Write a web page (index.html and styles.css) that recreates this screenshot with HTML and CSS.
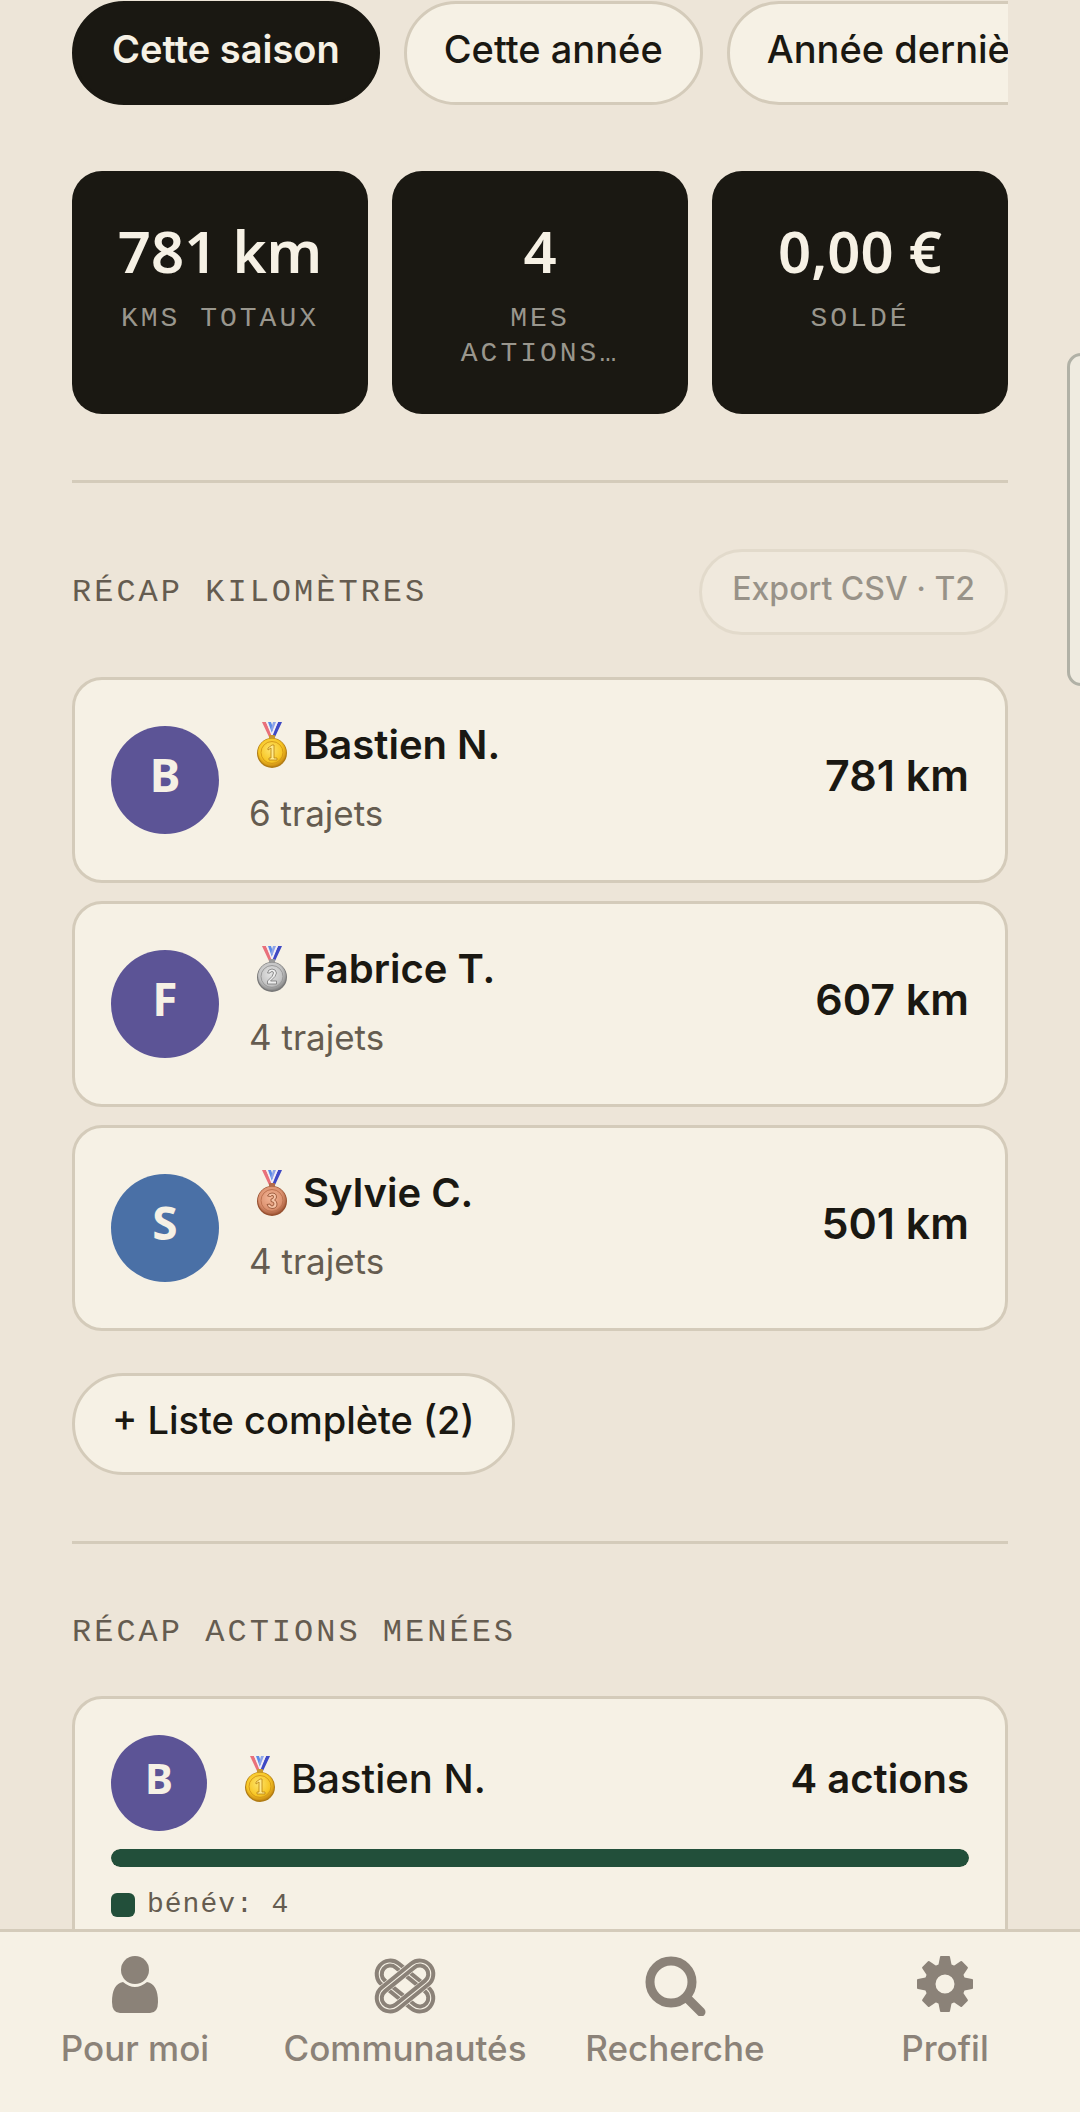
FILE: index.html
```html
<!DOCTYPE html>
<html lang="fr">
<head>
    <meta charset="UTF-8">
    <meta name="viewport" content="width=device-width, initial-scale=1">
    <title>Récap</title>
    <link rel="stylesheet" href="styles.css">
</head>
<body>
    <!-- dégradés et formes partagés par les médailles -->
    <svg class="defs" aria-hidden="true">
        <defs>
            <radialGradient id="gold" cx="45%" cy="40%" r="60%">
                <stop offset="0" stop-color="#fde36a"/>
                <stop offset="0.7" stop-color="#f7c624"/>
                <stop offset="1" stop-color="#c98a12"/>
            </radialGradient>
            <radialGradient id="silver" cx="45%" cy="40%" r="60%">
                <stop offset="0" stop-color="#e4e4e4"/>
                <stop offset="0.7" stop-color="#c3c3c3"/>
                <stop offset="1" stop-color="#858585"/>
            </radialGradient>
            <radialGradient id="bronze" cx="45%" cy="40%" r="60%">
                <stop offset="0" stop-color="#f3b596"/>
                <stop offset="0.7" stop-color="#dc9270"/>
                <stop offset="1" stop-color="#a55a3a"/>
            </radialGradient>
            <symbol id="ribbon" viewBox="0 0 30 46">
                <path d="M5 0h4l7 15h-4z" fill="#e9707a"/>
                <path d="M9 0h2l5 12-1 3z" fill="#f4eff5"/>
                <path d="M11 0h3l3 9-1 5z" fill="#5a8be8"/>
                <path d="M25 0h-4l-7 15h4z" fill="#3f49c4"/>
                <path d="M21 0h-2l-5 12 1 3z" fill="#f4eff5"/>
                <path d="M19 0h-3l-2 7 1 3z" fill="#8ea5ea"/>
            </symbol>
        </defs>
    </svg>

    <main class="content">
        <div class="filters">
            <button class="pill active" type="button">Cette saison</button>
            <button class="pill" type="button">Cette année</button>
            <button class="pill" type="button">Année dernière</button>
        </div>

        <div class="stats">
            <div class="stat">
                <div class="stat-value">781 km</div>
                <div class="stat-label">KMS TOTAUX</div>
            </div>
            <div class="stat">
                <div class="stat-value">4</div>
                <div class="stat-label">MES ACTIONS…</div>
            </div>
            <div class="stat">
                <div class="stat-value">0,00 €</div>
                <div class="stat-label">SOLDÉ</div>
            </div>
        </div>

        <section class="section">
            <div class="section-head">
                <h2 class="section-title">RÉCAP KILOMÈTRES</h2>
                <button class="export" type="button" disabled>Export CSV · T2</button>
            </div>
            <ul class="ranking">
                <li class="card row">
                    <span class="avatar violet">B</span>
                    <div class="who">
                        <div class="name">
                            <svg class="medal" viewBox="0 0 30 46" aria-hidden="true"><use href="#ribbon"/><rect x="12" y="13" width="6" height="4" rx="1" fill="#c9982c"/><circle cx="15" cy="31" r="15" fill="#b07c14"/><circle cx="15" cy="30.500" r="14" fill="url(#gold)"/><circle cx="15" cy="30.500" r="11" fill="none" stroke="#d69a18"/><path d="M11 26l4-3h2v13h3v2h-8v-2h2v-10l-3 2z" fill="#ffe98a" stroke="#b98110" stroke-width=".8"/></svg>
                            Bastien N.
                        </div>
                        <div class="trips">6 trajets</div>
                    </div>
                    <strong class="distance">781 km</strong>
                </li>
                <li class="card row">
                    <span class="avatar violet">F</span>
                    <div class="who">
                        <div class="name">
                            <svg class="medal" viewBox="0 0 30 46" aria-hidden="true"><use href="#ribbon"/><rect x="12" y="13" width="6" height="4" rx="1" fill="#9a9a9a"/><circle cx="15" cy="31" r="15" fill="#777"/><circle cx="15" cy="30.500" r="14" fill="url(#silver)"/><circle cx="15" cy="30.500" r="11" fill="none" stroke="#999"/><path d="M10.500 27q.5-4 4.500-4t4.500 4q0 3-6 8h6v3h-9v-3q6-5 6-8 0-1.500-1.500-1.500t-2 1.500z" fill="#eee" stroke="#777" stroke-width=".8"/></svg>
                            Fabrice T.
                        </div>
                        <div class="trips">4 trajets</div>
                    </div>
                    <strong class="distance">607 km</strong>
                </li>
                <li class="card row">
                    <span class="avatar blue">S</span>
                    <div class="who">
                        <div class="name">
                            <svg class="medal" viewBox="0 0 30 46" aria-hidden="true"><use href="#ribbon"/><rect x="12" y="13" width="6" height="4" rx="1" fill="#b36a4a"/><circle cx="15" cy="31" r="15" fill="#96502f"/><circle cx="15" cy="30.500" r="14" fill="url(#bronze)"/><circle cx="15" cy="30.500" r="11" fill="none" stroke="#bd7250"/><path d="M10.500 26q1-3 4.500-3 4.500 0 4.500 4 0 2-2 3 2.500 1 2.500 4 0 4.500-5 4.500-4 0-5-4l3-.5q.5 2 2 2t2-2-3-2.500v-2.500q2.500 0 2.500-2t-1.500-1.500-1.500 1z" fill="#f6c3a6" stroke="#8d4a2c" stroke-width=".8"/></svg>
                            Sylvie C.
                        </div>
                        <div class="trips">4 trajets</div>
                    </div>
                    <strong class="distance">501 km</strong>
                </li>
            </ul>
            <button class="pill more" type="button">+ Liste complète (2)</button>
        </section>

        <section class="section">
            <h2 class="section-title">RÉCAP ACTIONS MENÉES</h2>
            <div class="card action">
                <div class="action-head">
                    <span class="avatar small violet">B</span>
                    <div class="name regular">
                        <svg class="medal" viewBox="0 0 30 46" aria-hidden="true"><use href="#ribbon"/><rect x="12" y="13" width="6" height="4" rx="1" fill="#c9982c"/><circle cx="15" cy="31" r="15" fill="#b07c14"/><circle cx="15" cy="30.500" r="14" fill="url(#gold)"/><circle cx="15" cy="30.500" r="11" fill="none" stroke="#d69a18"/><path d="M11 26l4-3h2v13h3v2h-8v-2h2v-10l-3 2z" fill="#ffe98a" stroke="#b98110" stroke-width=".8"/></svg>
                        Bastien N.
                    </div>
                    <strong class="count">4 actions</strong>
                </div>
                <div class="bar"><div class="bar-fill" style="width: 100%"></div></div>
                <div class="legend"><span class="dot"></span>bénév: 4</div>
            </div>
        </section>
    </main>

    <nav class="tabs">
        <a class="tab" href="#moi">
            <svg class="tab-icon" viewBox="0 0 64 64" aria-hidden="true">
                <circle cx="32" cy="18" r="14"/>
                <path d="M20 30q12 10 24 0 11 2 11 20 0 11-8 11H17q-8 0-8-11 0-18 11-20z"/>
            </svg>
            Pour moi
        </a>
        <a class="tab" href="#communautes">
            <svg class="tab-icon knot" viewBox="0 0 64 64" aria-hidden="true">
                <g transform="rotate(39 32 34)">
                    <rect class="band" x="2" y="23" width="60" height="22" rx="11"/>
                    <rect class="line" x="2" y="23" width="60" height="22" rx="11"/>
                </g>
                <g transform="rotate(-39 32 34)">
                    <rect class="halo" x="2" y="23" width="60" height="22" rx="11"/>
                    <rect class="band" x="2" y="23" width="60" height="22" rx="11"/>
                    <rect class="line" x="2" y="23" width="60" height="22" rx="11"/>
                </g>
            </svg>
            Communautés
        </a>
        <a class="tab" href="#recherche">
            <svg class="tab-icon" viewBox="0 0 64 64" aria-hidden="true">
                <circle cx="28" cy="30" r="21" fill="none" stroke="currentColor" stroke-width="9"/>
                <path d="M45 47l13 13" stroke="currentColor" stroke-width="9" stroke-linecap="round"/>
            </svg>
            Recherche
        </a>
        <a class="tab" href="#profil">
            <svg class="tab-icon" viewBox="0 0 64 64" aria-hidden="true">
                <circle cx="32" cy="32" r="15" fill="none" stroke="currentColor" stroke-width="11"/>
                <g id="teeth">
                    <path id="tooth" d="M25 15l2-10q0-1 1-1h8q1 0 1 1l2 10z"/>
                    <use href="#tooth" transform="rotate(45 32 32)"/>
                    <use href="#tooth" transform="rotate(90 32 32)"/>
                    <use href="#tooth" transform="rotate(135 32 32)"/>
                </g>
                <use href="#teeth" transform="rotate(180 32 32)"/>
            </svg>
            Profil
        </a>
    </nav>

    <div class="edge-handle"></div>
</body>
</html>
```

FILE: styles.css
```css
* {
    box-sizing: border-box;
}
body {
    margin: 0;
    height: 100vh;
    display: flex;
    flex-direction: column;
    overflow: hidden;
    background-color: #ede5d8;
    color: #1a1812;
    font-family: Inter, sans-serif;
    font-size: 36px;
}
button {
    font-family: inherit;
    color: inherit;
}
.defs {
    position: absolute;
    width: 0;
    height: 0;
}
.content {
    flex: 1;
    min-height: 0;
    overflow: hidden;
    padding: 1px 72px 0;
}

.filters {
    display: flex;
    gap: 24px;
    overflow-x: auto;
    scrollbar-width: none;
    margin-bottom: 66px;
}
.pill {
    flex: none;
    height: 104px;
    padding: 0 37px 8px;
    border: 3px solid #d4cbba;
    border-radius: 52px;
    background-color: #f6f1e5;
    font-size: 38px;
    font-weight: 500;
    white-space: nowrap;
}
.pill.active {
    border-color: #1a1812;
    background-color: #1a1812;
    color: #f6f1e5;
    font-weight: 600;
}
.pill.more {
    height: 102px;
}

.stats {
    display: grid;
    grid-template-columns: repeat(3, 1fr);
    gap: 24px;
}
.stat {
    min-height: 243px;
    padding: 44px 36px 36px;
    border-radius: 30px;
    background-color: #1a1812;
    text-align: center;
}
.stat-value {
    color: #f6f1e5;
    font-family: "Noto Sans", sans-serif;
    font-size: 58px;
    font-weight: 600;
    line-height: 72px;
    white-space: nowrap;
}
.stat-label {
    margin-top: 14px;
    color: #99968d;
    font-family: "Liberation Mono", monospace;
    font-size: 28px;
    letter-spacing: 3px;
    line-height: 35px;
}

.section {
    margin-top: 66px;
    padding-top: 66px;
    border-top: 3px solid #d4cbba;
}
.section-head {
    display: flex;
    justify-content: space-between;
    align-items: center;
    margin-bottom: 42px;
}
.section-title {
    margin: 0;
    padding-top: 2px;
    color: #655c50;
    font-family: "Liberation Mono", monospace;
    font-size: 32px;
    font-weight: 400;
    letter-spacing: 3px;
    line-height: 42px;
}
.export {
    height: 86px;
    padding: 0 30px 8px;
    border: 3px solid #d4cbba;
    border-radius: 43px;
    background-color: #f6f1e5;
    font-size: 32px;
    font-weight: 500;
    opacity: 0.4;
}

.card {
    border: 3px solid #d4cbba;
    border-radius: 30px;
    background-color: #f6f1e5;
}
.ranking {
    display: flex;
    flex-direction: column;
    gap: 18px;
    margin: 0 0 42px;
    padding: 0;
    list-style: none;
}
.row {
    display: flex;
    align-items: center;
    gap: 30px;
    min-height: 206px;
    padding: 0 36px;
}
.avatar {
    display: flex;
    justify-content: center;
    align-items: center;
    width: 108px;
    height: 108px;
    padding-bottom: 12px;
    border-radius: 50%;
    color: #f6f1e5;
    font-family: "Noto Sans", sans-serif;
    font-size: 46px;
    font-weight: 700;
}
.avatar.small {
    width: 96px;
    height: 96px;
    font-size: 42px;
}
.violet {
    background-color: #5c5496;
}
.blue {
    background-color: #4a70a6;
}
.who {
    flex: 1;
    padding-bottom: 6px;
}
.name {
    display: flex;
    align-items: center;
    gap: 16px;
    padding-left: 8px;
    font-size: 40px;
    font-weight: 600;
    line-height: 72px;
}
.name.regular {
    flex: 1;
    font-weight: 500;
}
.medal {
    width: 30px;
    height: 46px;
}
.trips {
    color: #655c50;
    font-size: 35px;
    line-height: 64px;
}
.distance {
    padding-bottom: 10px;
    font-size: 43px;
    font-weight: 600;
}

.action {
    margin-top: 42px;
    padding: 36px;
}
.action-head {
    display: flex;
    align-items: center;
    gap: 30px;
}
.action-head .name {
    padding-bottom: 8px;
}
.count {
    padding-bottom: 10px;
    font-size: 40px;
    font-weight: 600;
}
.bar {
    height: 18px;
    margin: 18px 0;
    border-radius: 9px;
    background-color: #d4cbba;
    overflow: hidden;
}
.bar-fill {
    height: 100%;
    border-radius: 9px;
    background-color: #224f3a;
}
.legend {
    display: flex;
    align-items: center;
    gap: 12px;
    color: #655c50;
    font-family: "Liberation Mono", monospace;
    font-size: 28px;
    letter-spacing: 1px;
    line-height: 40px;
}
.dot {
    width: 24px;
    height: 24px;
    border-radius: 6px;
    background-color: #224f3a;
}

.tabs {
    display: grid;
    grid-template-columns: repeat(4, 1fr);
    height: 183px;
    padding-top: 20px;
    border-top: 3px solid #d4cbba;
    background-color: #f6f1e5;
}
.tab {
    display: flex;
    flex-direction: column;
    align-items: center;
    gap: 10px;
    color: #8b8278;
    font-size: 35px;
    font-weight: 500;
    line-height: 44px;
    text-decoration: none;
}
.tab-icon {
    width: 64px;
    height: 64px;
    fill: currentColor;
}
.knot rect {
    fill: none;
}
.knot .halo {
    stroke: #f6f1e5;
    stroke-width: 10px;
}
.knot .band {
    stroke: currentColor;
    stroke-width: 9px;
}
.knot .line {
    stroke: #f6f1e5;
    stroke-width: 1px;
}

/* poignée du panneau latéral, à cheval sur le bord de l'écran */
.edge-handle {
    position: fixed;
    top: 353px;
    right: -20px;
    width: 33px;
    height: 333px;
    border: 3px solid #b1b1a6;
    border-radius: 14px;
    background-color: #efebe0;
}
```
